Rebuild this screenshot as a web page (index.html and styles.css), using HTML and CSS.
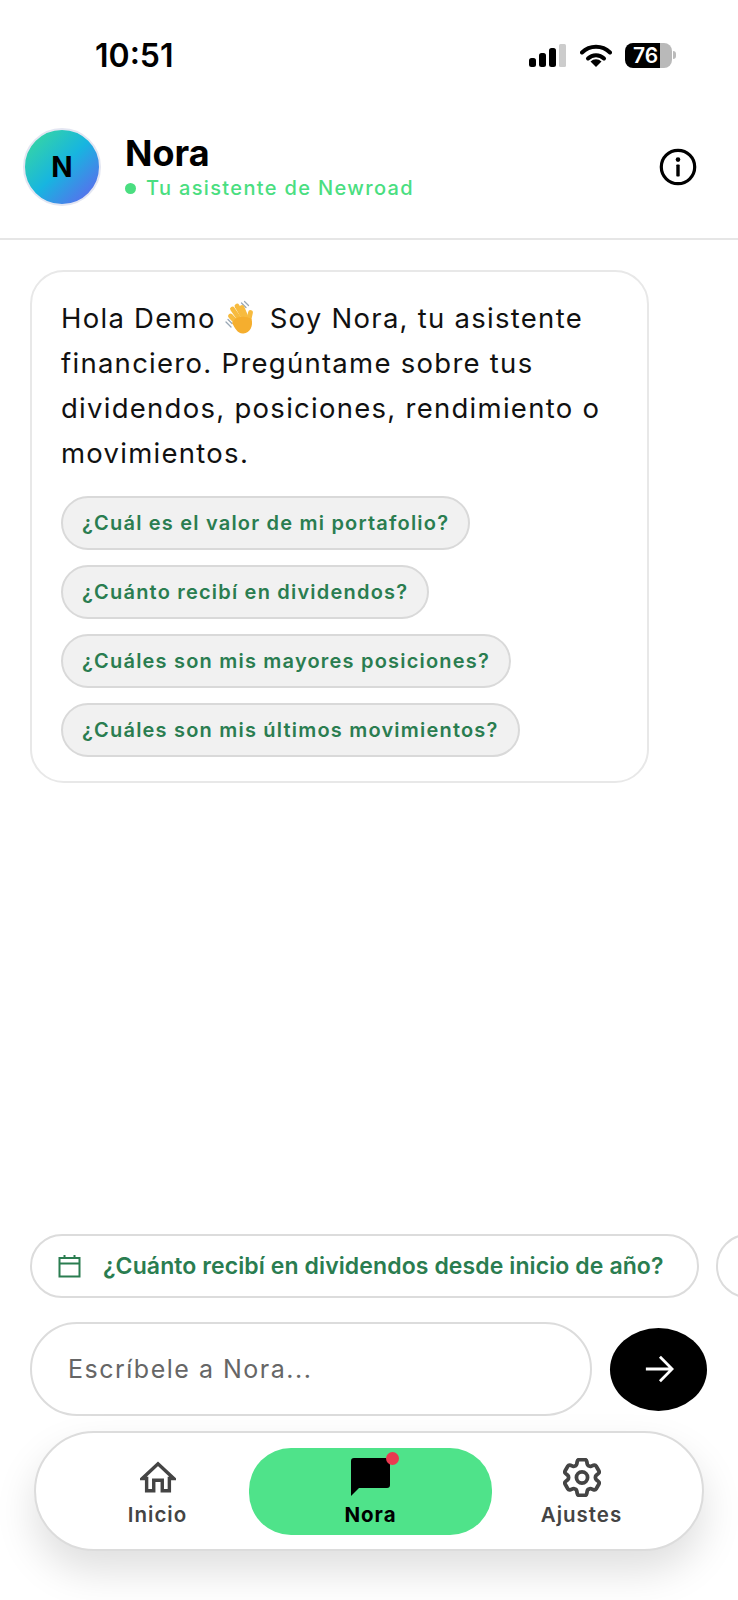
FILE: index.html
```html
<!DOCTYPE html>
<html lang="es">
<head>
    <meta charset="UTF-8">
    <meta name="viewport" content="width=device-width, initial-scale=1.0">
    <title>Nora</title>
    <link rel="stylesheet" href="styles.css">
</head>
<body>
    <div class="app">
        <div class="status-bar">
            <span class="time">10:51</span>
            <div class="status-icons">
                <svg class="signal" viewBox="0 0 37 23" width="37" height="23">
                    <rect x="0" y="14" width="7" height="9" rx="2.5" fill="#000"/>
                    <rect x="10" y="9" width="7" height="14" rx="2.5" fill="#000"/>
                    <rect x="20" y="4" width="7" height="19" rx="2.5" fill="#000"/>
                    <rect x="30" y="0" width="7" height="23" rx="1.5" fill="#ccc"/>
                </svg>
                <svg class="wifi" viewBox="0 0 32 23" width="32" height="23">
                    <path d="M2 8.5a20 20 0 0 1 28 0" fill="none" stroke="#000" stroke-width="4" stroke-linecap="round"/>
                    <path d="M8 14.5a11.5 11.5 0 0 1 16 0" fill="none" stroke="#000" stroke-width="4" stroke-linecap="round"/>
                    <path d="M10.5 17.5a8 8 0 0 1 11 0L16 23Z" fill="#000"/>
                </svg>
                <div class="battery">
                    <div class="battery-body"><span>76</span></div>
                    <div class="battery-nub"></div>
                </div>
            </div>
        </div>

        <header class="header">
            <div class="avatar">N</div>
            <div class="header-info">
                <h1>Nora</h1>
                <div class="online"><span class="dot"></span>Tu asistente de Newroad</div>
            </div>
            <svg class="info-icon" viewBox="0 0 38 38" width="38" height="38">
                <circle cx="19" cy="19" r="16.7" fill="none" stroke="#000" stroke-width="3.2"/>
                <circle cx="19" cy="11.6" r="2.3" fill="#000"/>
                <rect x="17.3" y="16.5" width="3.4" height="12" rx="0.8" fill="#000"/>
            </svg>
        </header>

        <main class="chat">
            <div class="bubble">
                <div class="message">
                    <div class="message-first">Hola Demo <svg class="wave" viewBox="8 6 36 36" width="36" height="36">
                        <path d="M11 29l5 5M13 26.5l4 4M26.5 10l4.5 4.5M29.5 8.5l4 4" fill="none" stroke="#9aa8b5" stroke-width="1.3" stroke-linecap="round"/>
                        <g fill="none" stroke="#f7bb3f" stroke-width="4.8" stroke-linecap="round">
                            <path d="M15.5 23l9 9.5"/>
                            <path d="M17.5 16l9 13"/>
                            <path d="M22 13l8 14"/>
                            <path d="M27 14.5l5 12"/>
                            <path d="M35.5 19.5l-2 9"/>
                        </g>
                        <path d="M19 27C23 23 31 23 36.5 26C38.5 33 35 40 28.5 40.5C22.5 41 20 35 17 30Z" fill="#f5ae2e"/>
                    </svg> Soy Nora, tu asistente</div>
                    financiero. Pregúntame sobre tus dividendos, posiciones, rendimiento o movimientos.
                </div>
                <div class="chips">
                    <button class="chip">¿Cuál es el valor de mi portafolio?</button>
                    <button class="chip">¿Cuánto recibí en dividendos?</button>
                    <button class="chip">¿Cuáles son mis mayores posiciones?</button>
                    <button class="chip">¿Cuáles son mis últimos movimientos?</button>
                </div>
            </div>
        </main>

        <div class="suggestions">
            <button class="suggestion">
                <svg viewBox="0 0 23 24" width="23" height="24">
                    <path d="M1.5 4h20v18.5h-20ZM1.5 9.5h20M6.5 1v4M16.5 1v4" fill="none" stroke="#2a7d50" stroke-width="2"/>
                </svg>
                ¿Cuánto recibí en dividendos desde inicio de año?
            </button>
            <button class="suggestion"></button>
        </div>

        <form class="composer">
            <input type="text" placeholder="Escríbele a Nora...">
            <button type="button" class="send">
                <svg viewBox="0 0 32 32" width="30" height="30">
                    <path d="M2 16h27M17 3l13 13-13 13" fill="none" stroke="#fff" stroke-width="3"/>
                </svg>
            </button>
        </form>

        <nav class="tabbar">
            <a class="tab">
                <span class="tab-icon">
                    <svg viewBox="0 0 38 33" width="36" height="32">
                        <path d="M2.5 18H7V31H14.5V20H23.5V31H31V18H35.5L19 2.5Z" fill="none" stroke="#444" stroke-width="3.6"/>
                    </svg>
                </span>
                Inicio
            </a>
            <a class="tab tab-active">
                <span class="tab-icon">
                    <svg viewBox="0 0 39 38" width="39" height="38">
                        <path d="M3 0H36A3 3 0 0 1 39 3V27A3 3 0 0 1 36 30H8L0 38V3A3 3 0 0 1 3 0Z" fill="#000"/>
                    </svg>
                    <span class="badge"></span>
                </span>
                Nora
            </a>
            <a class="tab">
                <span class="tab-icon">
                    <svg viewBox="2.5 2.2 19 19.6" width="38" height="39">
                        <path d="M9.594 3.94c.09-.542.56-.94 1.11-.94h2.593c.55 0 1.02.398 1.11.94l.213 1.281c.063.374.313.686.645.87.074.04.147.083.22.127.325.196.72.257 1.075.124l1.217-.456a1.125 1.125 0 0 1 1.37.49l1.296 2.247a1.125 1.125 0 0 1-.26 1.431l-1.003.827c-.293.241-.438.613-.43.992a7.723 7.723 0 0 1 0 .255c-.008.378.137.75.43.991l1.004.827c.424.35.534.955.26 1.43l-1.298 2.247a1.125 1.125 0 0 1-1.369.491l-1.217-.456c-.355-.133-.75-.072-1.076.124a6.47 6.47 0 0 1-.22.128c-.331.183-.581.495-.644.869l-.213 1.281c-.09.543-.56.94-1.11.94h-2.594c-.55 0-1.019-.398-1.11-.94l-.213-1.281c-.062-.374-.312-.686-.644-.87a6.52 6.52 0 0 1-.22-.127c-.325-.196-.72-.257-1.076-.124l-1.217.456a1.125 1.125 0 0 1-1.369-.49l-1.297-2.247a1.125 1.125 0 0 1 .26-1.431l1.004-.827c.292-.24.437-.613.43-.991a6.932 6.932 0 0 1 0-.255c.007-.38-.138-.751-.43-.992l-1.004-.827a1.125 1.125 0 0 1-.26-1.43l1.297-2.247a1.125 1.125 0 0 1 1.37-.491l1.216.456c.356.133.751.072 1.076-.124.072-.044.146-.086.22-.128.332-.183.582-.495.644-.869l.214-1.28Z" fill="none" stroke="#444" stroke-width="1.9"/>
                        <circle cx="12" cy="12" r="2.8" fill="none" stroke="#444" stroke-width="1.9"/>
                    </svg>
                </span>
                Ajustes
            </a>
        </nav>
    </div>
</body>
</html>
```

FILE: styles.css
```css
* {
    box-sizing: border-box;
}

body {
    margin: 0;
    background-color: #fff;
    font-family: Inter, "Noto Sans", sans-serif;
    color: #111;
}

button, input {
    font-family: inherit;
}

.app {
    width: 738px;
    height: 1600px;
    display: flex;
    flex-direction: column;
    overflow: hidden;
}

/* status bar */
.status-bar {
    height: 110px;
    flex-shrink: 0;
    display: flex;
    justify-content: space-between;
    align-items: center;
    padding: 0 62px 0 95px;
}

.time {
    font-size: 32px;
    font-weight: 600;
    color: #000;
}

.status-icons {
    display: flex;
    align-items: center;
    gap: 14px;
}

.wifi {
    margin-right: -1px;
}

.battery {
    display: flex;
    align-items: center;
    gap: 1px;
}

.battery-body {
    width: 47px;
    height: 25px;
    border-radius: 8px;
    background: linear-gradient(to right, #000 75%, #b9b9b9 75%);
    color: #fff;
    font-size: 21px;
    font-weight: 600;
    line-height: 25px;
    padding-left: 8px;
}

.battery-nub {
    width: 3px;
    height: 8px;
    border-radius: 0 3px 3px 0;
    background-color: #bbb;
}

/* header */
.header {
    height: 130px;
    flex-shrink: 0;
    display: flex;
    align-items: center;
    padding: 0 41px 14px 23px;
    border-bottom: 2px solid #e6e6e6;
}

.avatar {
    width: 78px;
    height: 78px;
    border-radius: 50%;
    border: 2px solid #e3e6f2;
    background: linear-gradient(135deg, #3ddc97 0%, #17b5e0 50%, #6a5cf0 100%);
    display: flex;
    align-items: center;
    justify-content: center;
    font-size: 28px;
    font-weight: 700;
    color: #000;
}

.header-info {
    flex: 1;
    margin-left: 24px;
}

.header-info h1 {
    margin: 0;
    font-size: 36px;
    font-weight: 700;
    line-height: 42px;
    color: #000;
}

.online {
    display: flex;
    align-items: center;
    margin-top: 1px;
    font-size: 20px;
    font-weight: 500;
    letter-spacing: 1.35px;
    line-height: 27px;
    color: #4ade80;
}

.dot {
    width: 11px;
    height: 11px;
    border-radius: 50%;
    background-color: #4ade80;
    margin-right: 10px;
}

/* chat */
.chat {
    flex: 1;
    padding: 30px 0 0 30px;
}

.bubble {
    width: 619px;
    height: 513px;
    padding: 24px 29px;
    border: 2px solid #e8e8e8;
    border-radius: 34px;
}

.message {
    font-size: 27.5px;
    line-height: 45px;
    letter-spacing: 1.27px;
}

.wave {
    vertical-align: -7px;
    margin: 0 2px 0 -2px;
}

.chips {
    display: flex;
    flex-direction: column;
    align-items: flex-start;
    gap: 15px;
    margin-top: 20px;
}

.chip {
    height: 54px;
    padding: 0 19px;
    border: 2px solid #d9d9d9;
    border-radius: 27px;
    background-color: #f1f1f1;
    color: #2a7d50;
    font-size: 20px;
    font-weight: 600;
    letter-spacing: 1.2px;
}

/* suggestions */
.suggestions {
    display: flex;
    gap: 17px;
    padding-left: 30px;
    flex-shrink: 0;
}

.suggestion {
    flex-shrink: 0;
    height: 64px;
    min-width: 60px;
    display: flex;
    align-items: center;
    gap: 22px;
    padding: 0 33px 0 26px;
    border: 2px solid #dcdcdc;
    border-radius: 32px;
    background-color: #fff;
    color: #2a7d50;
    font-size: 23px;
    font-weight: 560;
    letter-spacing: 0.1px;
}

/* composer */
.composer {
    display: flex;
    align-items: center;
    gap: 18px;
    margin-top: 24px;
    padding-left: 30px;
    flex-shrink: 0;
}

.composer input {
    width: 562px;
    height: 94px;
    padding: 0 36px;
    border: 2px solid #dcdcdc;
    border-radius: 47px;
    font-size: 25px;
    letter-spacing: 1.5px;
    background-color: #fff;
}

.composer input::placeholder {
    color: #666;
    opacity: 1;
}

.send {
    width: 97px;
    height: 83px;
    border: none;
    border-radius: 50%;
    background-color: #000;
    display: flex;
    align-items: center;
    justify-content: center;
}

/* tab bar */
.tabbar {
    display: grid;
    grid-template-columns: 183px 243px 179px;
    align-items: center;
    width: 670px;
    height: 120px;
    flex-shrink: 0;
    margin: 15px 0 49px 34px;
    padding: 0 33px 0 30px;
    border: 2px solid #dcdcdc;
    border-radius: 60px;
    background-color: #fff;
    box-shadow: 0 20px 40px rgba(0, 0, 0, 0.13);
}

.tab {
    display: flex;
    flex-direction: column;
    align-items: center;
    justify-content: center;
    gap: 5px;
    padding-top: 2px;
    font-size: 20.5px;
    font-weight: 600;
    letter-spacing: 1px;
    color: #444;
}

.tab-active {
    height: 87px;
    border-radius: 42px;
    background-color: #4fe38a;
    color: #000;
    font-weight: 700;
}

.tab-icon {
    position: relative;
    display: flex;
    align-items: center;
    height: 39px;
}

.badge {
    position: absolute;
    top: -6px;
    right: -9px;
    width: 13px;
    height: 13px;
    border-radius: 50%;
    background-color: #ea3a50;
}
```
